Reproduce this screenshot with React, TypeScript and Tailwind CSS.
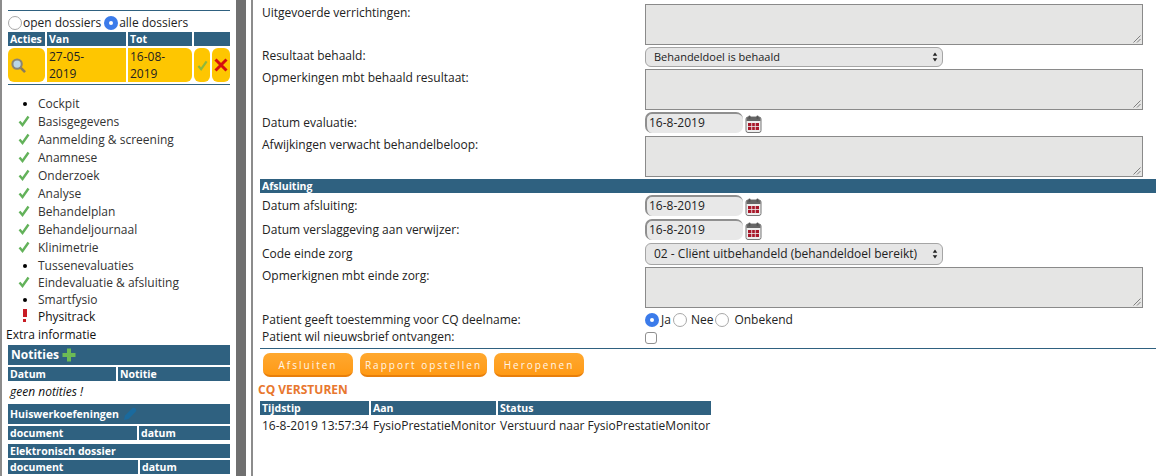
import type { ReactNode } from 'react'

const NAV = [
  { label: 'Cockpit', mark: 'dot', height: 'h-[18px]' },
  { label: 'Basisgegevens', mark: 'check', height: 'h-[18px]' },
  { label: 'Aanmelding & screening', mark: 'check', height: 'h-[18px]' },
  { label: 'Anamnese', mark: 'check', height: 'h-[18px]' },
  { label: 'Onderzoek', mark: 'check', height: 'h-[18px]' },
  { label: 'Analyse', mark: 'check', height: 'h-[18px]' },
  { label: 'Behandelplan', mark: 'check', height: 'h-[18px]' },
  { label: 'Behandeljournaal', mark: 'check', height: 'h-[18px]' },
  { label: 'Klinimetrie', mark: 'check', height: 'h-[18px]' },
  { label: 'Tussenevaluaties', mark: 'dot', height: 'h-[17px]' },
  { label: 'Eindevaluatie & afsluiting', mark: 'check', height: 'h-[18px]' },
  { label: 'Smartfysio', mark: 'dot', height: 'h-[16px]' },
  { label: 'Physitrack', mark: 'alert', height: 'h-[18px]' },
]

function Check({ className }: { className: string }) {
  return (
    <svg viewBox="0 0 12 12" className={className}>
      <path d="M1.5 6.5 L4.5 10 L10.5 1.5" fill="none" stroke="currentColor" strokeWidth="2.4" />
    </svg>
  )
}

function Radio({ checked }: { checked?: boolean }) {
  if (checked) {
    return (
      <span className="flex h-[14px] w-[14px] shrink-0 items-center justify-center rounded-full bg-[#3b7bea]">
        <span className="h-[4px] w-[4px] rounded-full bg-white" />
      </span>
    )
  }
  return <span className="h-[14px] w-[14px] shrink-0 rounded-full border border-[#a8a8a8] bg-white" />
}

function Head({ children, className = '' }: { children?: ReactNode; className?: string }) {
  return (
    <div className={`flex items-center bg-[#2f6180] pl-[2px] text-[10.5px] font-bold text-white ${className}`}>
      {children}
    </div>
  )
}

function Calendar() {
  return (
    <svg viewBox="0 0 16 18" className="ml-[2px] mt-[3px] h-[18px] w-[17px]">
      <rect x="0.5" y="2" width="15" height="15.5" rx="2" fill="#eeeeee" stroke="#777777" />
      <path d="M1 3.5 a1.5 1.5 0 0 1 1.5 -1.5 h11 a1.5 1.5 0 0 1 1.5 1.5 V6 H1 Z" fill="#666666" />
      <rect x="3" y="0.5" width="2" height="3.5" rx="1" fill="#555555" />
      <rect x="11" y="0.5" width="2" height="3.5" rx="1" fill="#555555" />
      <rect x="2.5" y="8" width="11" height="7" fill="#a8182a" />
      <path d="M6.2 8 V15 M9.8 8 V15 M2.5 11.5 H13.5" stroke="#eeeeee" strokeWidth="0.8" />
    </svg>
  )
}

function Row({ label, className, labelClass = '', children }: { label?: string; className: string; labelClass?: string; children?: ReactNode }) {
  return (
    <div className={`flex items-start ${className}`}>
      <div className={`w-[385px] shrink-0 pl-[2px] ${labelClass}`}>{label}</div>
      <div className="flex min-w-0 flex-1">{children}</div>
    </div>
  )
}

function Area() {
  return (
    <div className="relative h-[41px] w-[498px] border border-[#8a8a8a] bg-[#e5e5e4]">
      <svg viewBox="0 0 8 8" className="absolute bottom-[1px] right-[1px] h-[8px] w-[8px]">
        <path d="M0.5 7.5 L7.5 0.5 M4 7.5 L7.5 4" stroke="#666666" strokeWidth="0.8" />
      </svg>
    </div>
  )
}

function DateField() {
  return (
    <>
      <div className="flex h-[21px] w-[98px] items-center rounded-[7px] border-l-2 border-t-2 border-l-[#8f8f8f] border-t-[#8f8f8f] bg-[#e8e8e8] pb-[1px] pl-[2px] text-[12px] text-[#222]">
        16-8-2019
      </div>
      <Calendar />
    </>
  )
}

function Select({ children, className }: { children: string; className: string }) {
  return (
    <div className={`flex w-[298px] items-center justify-between rounded-[6px] border border-[#a5a5a5] bg-[#e6e6e6] pl-[8px] pr-[4px] text-[#222] ${className}`}>
      <span>{children}</span>
      <svg viewBox="0 0 6 11" className="h-[10px] w-[6px]">
        <path d="M3 0.5 L5.5 4 H0.5 Z M3 10.5 L5.5 7 H0.5 Z" fill="#222222" />
      </svg>
    </div>
  )
}

function OrangeButton({ children, className }: { children: string; className: string }) {
  return (
    <div
      className={`flex h-[24px] items-center justify-center rounded-[7px] border-b-2 border-b-[#e87f0b] bg-gradient-to-b from-[#ffa82e] to-[#ff9a14] pt-[2px] text-[10px] tracking-[2px] text-[#fff6e8] ${className}`}
    >
      {children}
    </div>
  )
}

export default function App() {
  return (
    <div className="flex h-[476px] w-[1156px] overflow-hidden bg-white font-['Open_Sans',sans-serif] text-[12px] leading-[18px] text-[#222]">
      <aside className="h-full w-[236px] shrink-0 border-l-2 border-l-[#8c8c8c] pl-[6px] pr-[6px] pt-[10px]">
        <div className="flex h-[22px] items-end gap-[1px] border-t border-t-[#2f6180] pb-[2px]">
          <Radio />
          <span className="mr-[2px] leading-[15px]">open dossiers</span>
          <Radio checked />
          <span className="leading-[15px]">alle dossiers</span>
        </div>
        <div className="flex h-[14px] gap-[2px]">
          <Head className="w-[37px]">Acties</Head>
          <Head className="w-[79px]">Van</Head>
          <Head className="w-[64px]">Tot</Head>
          <Head className="flex-1" />
        </div>
        <div className="mt-[2px] flex h-[34px] gap-[2px]">
          <div className="flex w-[37px] items-center rounded-[6px] bg-[#fec601] pl-[3px]">
            <svg viewBox="0 0 16 16" className="h-[15px] w-[15px]">
              <circle cx="6.5" cy="6.5" r="5" fill="#b9d6e6" stroke="#8a8574" strokeWidth="2.2" />
              <path d="M10.5 10.5 L15 15" stroke="#8a7c5c" strokeWidth="2.8" />
            </svg>
          </div>
          <div className="w-[79px] bg-[#fec601] pl-[2px] leading-[17px]">27-05-<br />2019</div>
          <div className="w-[64px] rounded-r-[6px] bg-[#fec601] pl-[2px] leading-[17px]">16-08-<br />2019</div>
          <div className="flex w-[16px] items-center justify-center rounded-[6px] bg-[#fec601]">
            <Check className="h-[11px] w-[11px] text-[#8fb83c]" />
          </div>
          <div className="flex flex-1 items-center justify-center rounded-[6px] bg-[#fec601]">
            <svg viewBox="0 0 14 14" className="h-[14px] w-[14px]">
              <path d="M1.5 1.5 L12.5 12.5 M12.5 1.5 L1.5 12.5" stroke="#d50f0f" strokeWidth="3" />
            </svg>
          </div>
        </div>
        <div className="mt-[2px] h-[1px] bg-[#2f6180]" />
        <ul className="mt-[10px] text-[#333]">
          {NAV.map((item) => (
            <li key={item.label} className={`flex items-center ${item.height}`}>
              <span className="flex w-[30px] shrink-0 justify-center pl-[1px]">
                {item.mark === 'dot' && <span className="ml-[2px] h-[4px] w-[4px] rounded-full bg-black" />}
                {item.mark === 'check' && <Check className="mb-[3px] h-[12px] w-[12px] text-[#63b25a]" />}
                {item.mark === 'alert' && (
                  <span className="mb-[3px] ml-[2px] flex flex-col items-center gap-[2px]">
                    <span className="h-[8px] w-[4px] bg-[#c81c25]" />
                    <span className="h-[3px] w-[3px] bg-[#c81c25]" />
                  </span>
                )}
              </span>
              <span className={item.mark === 'alert' ? 'text-[#111]' : ''}>{item.label}</span>
            </li>
          ))}
        </ul>
        <div className="ml-[-2px] h-[19px] text-[#111]">Extra informatie</div>
        <div className="flex h-[20px] items-center gap-[3px] bg-[#2f6180] pl-[3px] text-[12px] font-bold text-white">
          Notities
          <svg viewBox="0 0 14 14" className="h-[14px] w-[14px]">
            <path d="M7 0.5 V13.5 M0.5 7 H13.5" stroke="#6cbb55" strokeWidth="4" />
          </svg>
        </div>
        <div className="mt-[2px] flex h-[14px] gap-[2px]">
          <Head className="w-[108px]">Datum</Head>
          <Head className="flex-1">Notitie</Head>
        </div>
        <div className="h-[23px] pl-[2px] pt-[2px] text-[12px] italic text-[#111]">geen notities !</div>
        <Head className="h-[20px] gap-[3px]">
          Huiswerkoefeningen
          <svg viewBox="0 0 16 16" className="h-[16px] w-[16px]">
            <path d="M2 14 L3 9.5 L10 2.5 A1.5 1.5 0 0 1 13.5 6 L6.5 13 Z" fill="#1a6a9e" />
          </svg>
        </Head>
        <div className="mt-[2px] flex h-[14px] gap-[2px]">
          <Head className="w-[129px]">document</Head>
          <Head className="flex-1">datum</Head>
        </div>
        <Head className="mt-[4px] h-[14px]">Elektronisch dossier</Head>
        <div className="mt-[2px] flex h-[14px] gap-[2px]">
          <Head className="w-[130px]">document</Head>
          <Head className="flex-1">datum</Head>
        </div>
      </aside>

      <div className="h-full w-[10px] shrink-0 bg-[#707070]" />
      <div className="h-full w-[7px] shrink-0 border-r-2 border-r-[#8c8c8c]" />

      <main className="h-full min-w-0 flex-1 pl-[7px] pt-[4px]">
        <Row label="Uitgevoerde verrichtingen:" className="h-[43px]"><Area /></Row>
        <Row label="Resultaat behaald:" className="h-[22px]">
          <Select className="h-[20px] text-[11px]">Behandeldoel is behaald</Select>
        </Row>
        <Row label="Opmerkingen mbt behaald resultaat:" className="h-[43px]"><Area /></Row>
        <Row label="Datum evaluatie:" className="h-[24px]" labelClass="pt-[2px]"><DateField /></Row>
        <Row label="Afwijkingen verwacht behandelbeloop:" className="h-[43px]"><Area /></Row>
        <div className="flex h-[14px] items-center bg-[#2f6180] pl-[2px] text-[10.5px] font-bold text-white">Afsluiting</div>
        <Row label="Datum afsluiting:" className="h-[24px] pt-[2px]" labelClass="pt-[2px]"><DateField /></Row>
        <Row label="Datum verslaggeving aan verwijzer:" className="h-[24px] pt-[2px]" labelClass="pt-[2px]"><DateField /></Row>
        <Row label="Code einde zorg" className="h-[26px] pt-[2px]" labelClass="pt-[2px]">
          <Select className="h-[22px] text-[12px]">02 - Cliënt uitbehandeld (behandeldoel bereikt)</Select>
        </Row>
        <Row label="Opmerkignen mbt einde zorg:" className="h-[44px]"><Area /></Row>
        <Row label="Patient geeft toestemming voor CQ deelname:" className="h-[16px] items-center">
          <div className="flex items-center">
            <Radio checked />
            <span className="ml-[2px] mr-[2px]">Ja</span>
            <Radio />
            <span className="ml-[4px] mr-[2px]">Nee</span>
            <Radio />
            <span className="ml-[5px]">Onbekend</span>
          </div>
        </Row>
        <Row label="Patient wil nieuwsbrief ontvangen:" className="h-[21px] pt-[1px]">
          <span className="mt-[4px] h-[12px] w-[12px] rounded-[3px] border border-[#8f8f8f] bg-white" />
        </Row>
        <div className="h-[1px] bg-[#2f6180]" />
        <div className="flex gap-[7px] pl-[3px] pt-[4px]">
          <OrangeButton className="w-[90px]">Afsluiten</OrangeButton>
          <OrangeButton className="w-[127px]">Rapport opstellen</OrangeButton>
          <OrangeButton className="w-[90px]">Heropenen</OrangeButton>
        </div>
        <div className="mt-[4px] h-[20px] text-[12px] font-bold leading-[18px] text-[#e8772e] [text-indent:-2px]">CQ VERSTUREN</div>
        <div className="flex h-[14px] w-[451px] gap-[2px]">
          <Head className="w-[109px]">Tijdstip</Head>
          <Head className="w-[125px]">Aan</Head>
          <Head className="flex-1">Status</Head>
        </div>
        <div className="mt-[2px] flex text-[12px] text-[#222]">
          <span className="w-[111px] pl-[2px]">16-8-2019 13:57:34</span>
          <span className="w-[127px] pl-[2px]">FysioPrestatieMonitor</span>
          <span className="pl-[2px]">Verstuurd naar FysioPrestatieMonitor</span>
        </div>
      </main>
    </div>
  )
}
